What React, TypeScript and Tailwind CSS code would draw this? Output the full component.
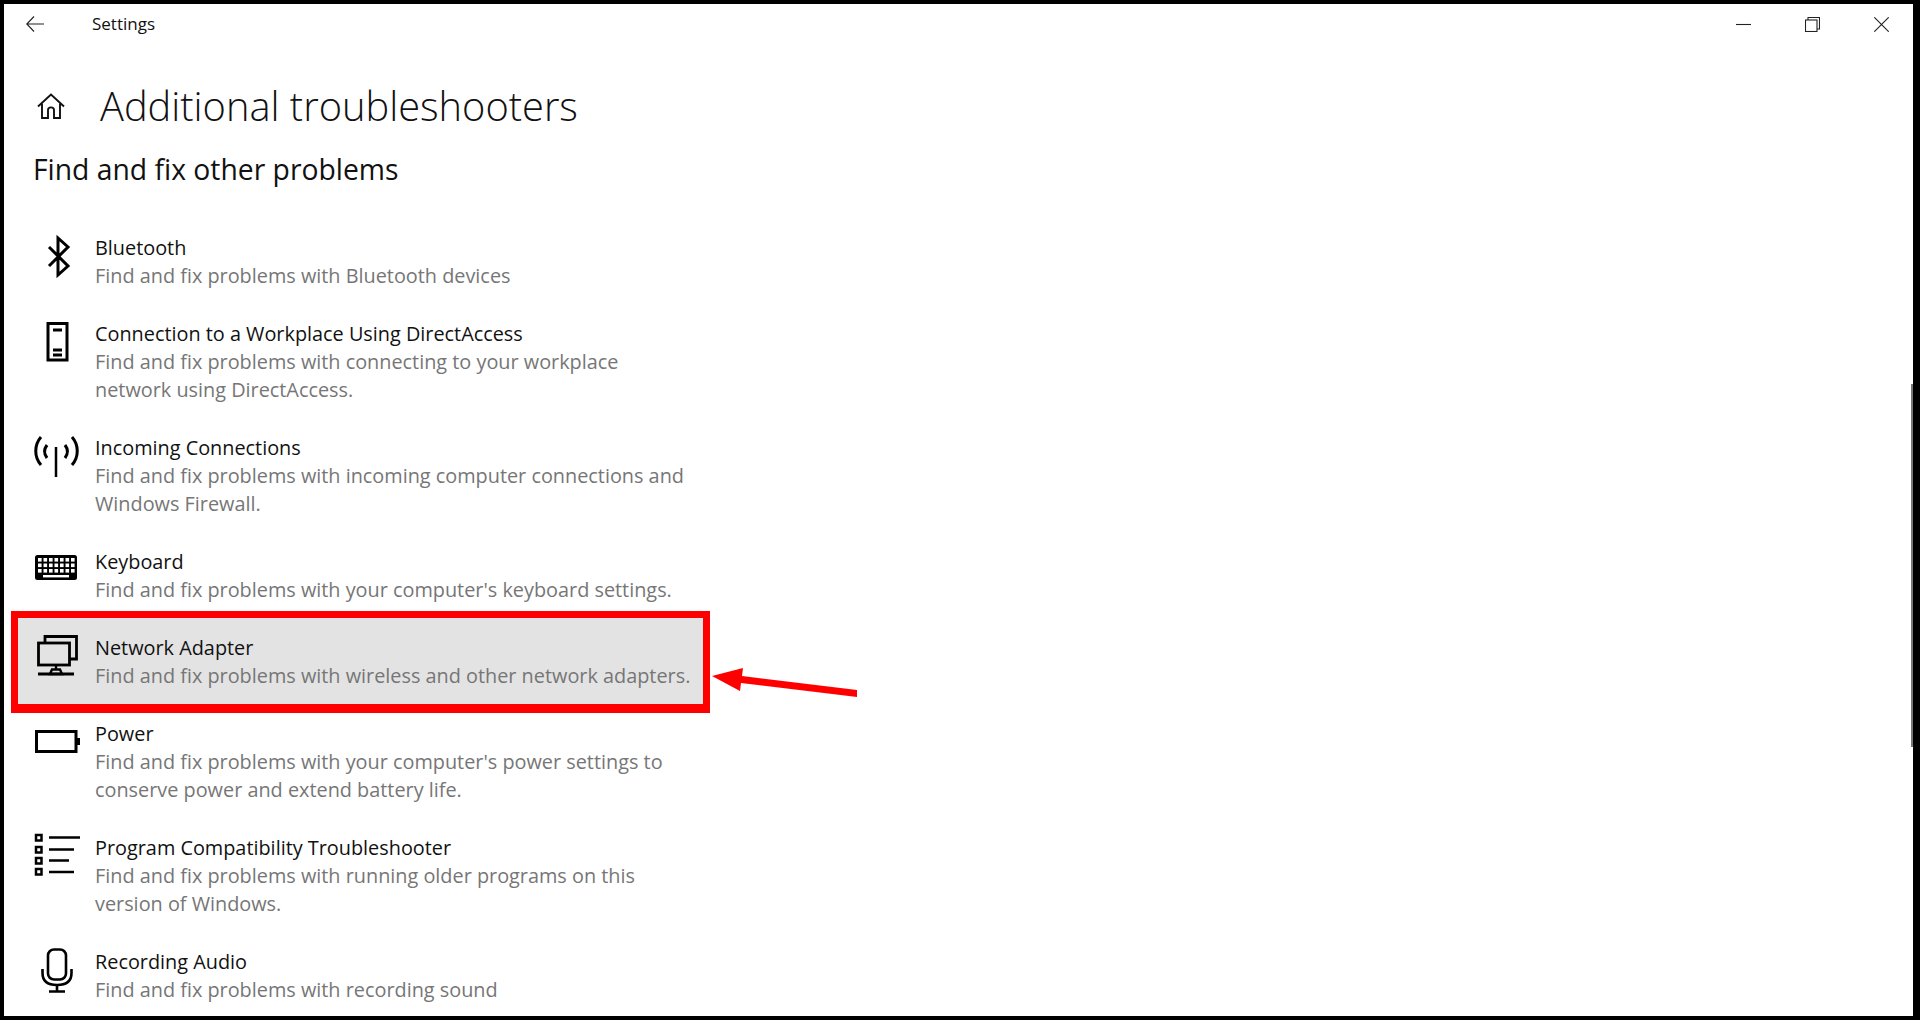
import React from "react";

const Icon = ({ children }: { children: React.ReactNode }) => (
  <svg viewBox="0 0 48 56" className="w-12 h-14 shrink-0 -mt-1 fill-none stroke-black" strokeWidth={3}>
    {children}
  </svg>
);

const Bluetooth = () => (
  <Icon>
    <path d="M16 17 L35 36 L25 45 L25 8 L35 17 L16 36" strokeWidth={3} />
  </Icon>
);
const Phone = () => (
  <Icon>
    <rect x="15" y="7.5" width="19" height="36.5" strokeWidth={3} />
    <path d="M20 14 H29 M20 34 H29 M20 39 H29" strokeWidth={3} />
  </Icon>
);
const Antenna = () => (
  <Icon>
    <path d="M23 17 V47" strokeWidth={2.5} />
    <path d="M8 7 C1 15 1 27 8 35 M39 7 C46 15 46 27 39 35" strokeWidth={3} />
    <path d="M14 15 C11 19 11 24 14 28 M32 15 C35 19 35 24 32 28" strokeWidth={3} />
  </Icon>
);
const Keyboard = () => {
  const cols = [7, 12.5, 18, 23.5, 29, 34.5, 40];
  const rows = [16, 21.5, 27];
  return (
    <Icon>
      <rect x="2" y="11" width="42" height="25" rx="2.5" className="fill-black stroke-none" />
      {rows.map((y) =>
        cols.map((x) => <rect key={`${x}-${y}`} x={x - 2} y={y - 2} width="3.6" height="3.6" className="fill-white stroke-none" />)
      )}
      <rect x="10" y="31" width="26" height="2.4" className="fill-white stroke-none" />
    </Icon>
  );
};
const Network = () => (
  <Icon>
    <rect x="5.5" y="13" width="31" height="22" strokeWidth={2.8} />
    <path d="M12 12 V6.5 H43.5 V29 H37" strokeWidth={2.8} />
    <path d="M23 35 V39 M17 44 L19 39.5 H27 L29 44 Z" strokeWidth={2.4} />
    <path d="M5 44 H41" strokeWidth={3} />
  </Icon>
);
const Power = () => (
  <Icon>
    <rect x="3.5" y="15.5" width="39.5" height="20" strokeWidth={3} />
    <rect x="44" y="22" width="3" height="7" className="fill-black stroke-none" />
  </Icon>
);
const Program = () => (
  <Icon>
    {[5, 17, 28, 39].map((y) => (
      <rect key={y} x="3" y={y} width="5.5" height="5.5" strokeWidth={2.5} />
    ))}
    <path d="M16 7.5 H47 M16 19.5 H41 M16 30.5 H36 M16 42 H41" strokeWidth={2.4} />
  </Icon>
);
const Mic = () => (
  <Icon>
    <rect x="15" y="5.5" width="18" height="30" rx="6" strokeWidth={2.6} />
    <path d="M9.5 25 V29 C9.5 37 15 41 24 41 C33 41 38.5 37 38.5 29 V25" strokeWidth={2.6} />
    <path d="M24 41 V47 M16 47.5 H32" strokeWidth={2.6} />
  </Icon>
);

const rows: { icon: React.ReactNode; title: string; lines: string[]; active?: boolean }[] = [
  { icon: <Bluetooth />, title: "Bluetooth", lines: ["Find and fix problems with Bluetooth devices"] },
  { icon: <Phone />, title: "Connection to a Workplace Using DirectAccess", lines: ["Find and fix problems with connecting to your workplace", "network using DirectAccess."] },
  { icon: <Antenna />, title: "Incoming Connections", lines: ["Find and fix problems with incoming computer connections and", "Windows Firewall."] },
  { icon: <Keyboard />, title: "Keyboard", lines: ["Find and fix problems with your computer's keyboard settings."] },
  { icon: <Network />, title: "Network Adapter", lines: ["Find and fix problems with wireless and other network adapters."], active: true },
  { icon: <Power />, title: "Power", lines: ["Find and fix problems with your computer's power settings to", "conserve power and extend battery life."] },
  { icon: <Program />, title: "Program Compatibility Troubleshooter", lines: ["Find and fix problems with running older programs on this", "version of Windows."] },
  { icon: <Mic />, title: "Recording Audio", lines: ["Find and fix problems with recording sound"] },
];

export default function App() {
  return (
    <div className="relative h-screen w-full overflow-hidden bg-white border-black border-t-4 border-l-4 border-r-[7px] border-b-4 font-['Open_Sans','Noto_Sans',sans-serif] text-black">
      <div className="flex items-center h-10">
        <svg viewBox="0 0 18 16" className="w-[18px] h-4 ml-[22px] fill-none stroke-[#222]" strokeWidth={1.1}>
          <path d="M8 0.5 L0.8 8 L8 15.5 M0.8 8 H18" />
        </svg>
        <span className="ml-[48px] text-[17px] leading-6 text-[#111]">Settings</span>
        <div className="ml-auto flex items-center gap-[54px] pr-[24px]">
          <svg viewBox="0 0 15 15" className="w-[15px] h-[15px] stroke-[#222] fill-none" strokeWidth={1.1}>
            <path d="M0 7.5 H15" />
          </svg>
          <svg viewBox="0 0 15 15" className="w-[15px] h-[15px] stroke-[#222] fill-none" strokeWidth={1.1}>
            <rect x="0.5" y="3" width="11.5" height="11.5" />
            <path d="M3 3 V0.5 H14.5 V12 H12" />
          </svg>
          <svg viewBox="0 0 15 15" className="w-[15px] h-[15px] stroke-[#222] fill-none" strokeWidth={1.1}>
            <path d="M0.3 0.3 L14.7 14.7 M14.7 0.3 L0.3 14.7" />
          </svg>
        </div>
      </div>

      <div className="flex items-center h-[60px] mt-8">
        <svg viewBox="0 0 28 26" className="w-7 h-[26px] ml-[33px] fill-none stroke-[#111]" strokeWidth={1.9}>
          <path d="M1 13.5 L14 1.5 L27 13.5" />
          <path d="M5 10.5 V25 H11 V17 C11 13.5 17 13.5 17 17 V25 H23 V10.5" />
        </svg>
        <h1 className="ml-[35px] text-[39.8px] leading-[60px] font-light whitespace-nowrap text-[#111]">Additional troubleshooters</h1>
      </div>

      <h2 className="ml-[29px] mt-[15px] text-[28.3px] leading-9 font-normal whitespace-nowrap text-[#111]">Find and fix other problems</h2>

      <ul className="mt-[31px] ml-[14px] w-[685px]">
        {rows.map((r) => (
          <li
            key={r.title}
            className={`flex pt-4 pb-[14px] pl-[15px] ${r.active ? "bg-[#e3e3e3] outline-[7px] outline-[#ff0000] shadow-[0_2px_0_7px_#ff0000]" : ""}`}
          >
            {r.icon}
            <div className="ml-[14px] text-[19.85px] leading-7 whitespace-nowrap">
              <div className="text-[#111]">{r.title}</div>
              {r.lines.map((l) => (
                <div key={l} className="text-[#767676]">{l}</div>
              ))}
            </div>
          </li>
        ))}
      </ul>

      <svg viewBox="0 0 150 36" className="absolute left-[704px] top-[660px] w-[150px] h-9 fill-[#ff0000]">
        <path d="M4 12 L35 4 L34 12 L149 26 L149 33 L33 19 L32 27 Z" />
      </svg>

      <div className="absolute right-0 top-[380px] h-[363px] w-[2px] bg-[#777]" />
    </div>
  );
}
